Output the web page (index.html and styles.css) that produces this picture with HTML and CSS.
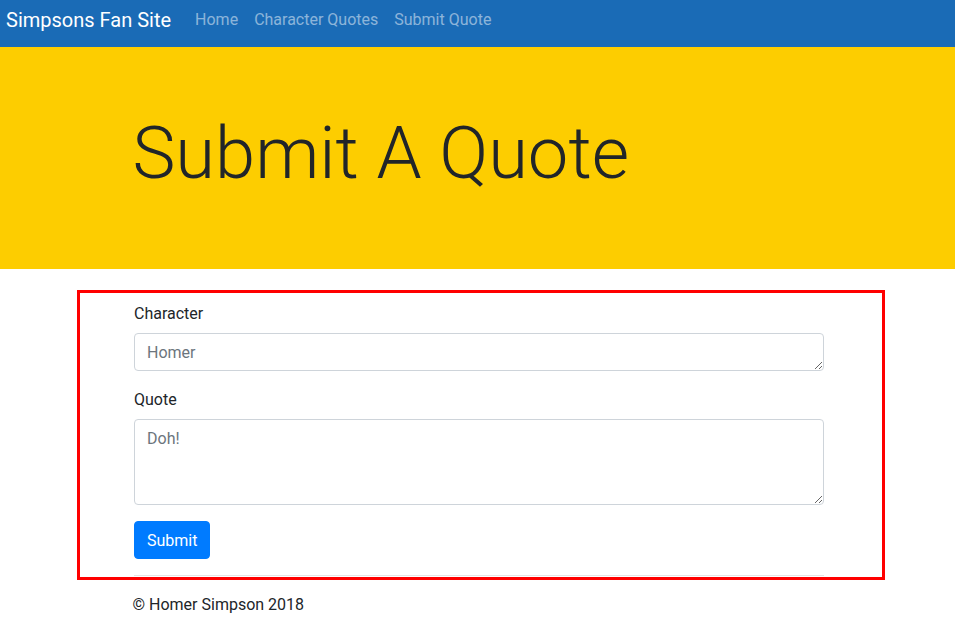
FILE: index.html
```html
<!DOCTYPE html>
<html lang="en">
<head>
<meta charset="utf-8">
<title>Submit A Quote</title>
<link rel="stylesheet" href="styles.css">
</head>
<body>
<nav class="navbar">
  <a class="brand" href="#">Simpsons Fan Site</a>
  <ul class="nav">
    <li><a class="nav-link" href="#">Home</a></li>
    <li><a class="nav-link" href="#">Character Quotes</a></li>
    <li><a class="nav-link" href="#">Submit Quote</a></li>
  </ul>
</nav>
<header class="jumbotron">
  <div class="container">
    <h1 class="display">Submit A Quote</h1>
  </div>
</header>
<main class="highlight">
  <form class="quote-form">
    <div class="form-group">
      <label class="label" for="character">Character</label>
      <textarea class="control" id="character" rows="1" placeholder="Homer"></textarea>
    </div>
    <div class="form-group">
      <label class="label" for="quote">Quote</label>
      <textarea class="control" id="quote" rows="3" placeholder="Doh!"></textarea>
    </div>
    <button class="btn" type="button">Submit</button>
  </form>
  <hr class="rule">
</main>
<footer class="footer">
  <p class="copy">© Homer Simpson 2018</p>
</footer>
</body>
</html>
```
FILE: styles.css
```css
* { box-sizing: border-box; }
html, body { margin: 0; padding: 0; }
body {
  font-family: Roboto, "Liberation Sans", sans-serif;
  font-size: 16px;
  line-height: 1.5;
  color: #212529;
  background: #fff;
}
.navbar {
  display: flex;
  align-items: center;
  height: 47px;
  padding: 0 6px 8px;
  background: #1a6bb6;
}
.brand {
  color: #fff;
  text-decoration: none;
  font-size: 20px;
  line-height: 30px;
  margin-right: 16px;
}
.nav {
  display: flex;
  list-style: none;
  margin: 0;
  padding: 0;
}
.nav-link {
  display: block;
  padding: 8px;
  color: rgba(255, 255, 255, 0.5);
  text-decoration: none;
}
.jumbotron {
  background: #fdcd00;
  padding: 64px 0;
}
.container {
  width: 690px;
  margin: 0 auto;
}
.display {
  margin: 0 0 8px;
  font-size: 72.3px;
  font-weight: 300;
  line-height: 86.4px;
}
.highlight {
  width: 808px;
  margin: 21px 0 0 77px;
  border: 3px solid #ff0000;
  padding: 8px 58px 0 54px;
}
.form-group { margin-bottom: 16px; }
.label {
  display: inline-block;
  padding-top: 1px;
  margin-bottom: 7px;
}
.control {
  display: block;
  width: 100%;
  padding: 7px 12px 5px;
  font-family: inherit;
  font-size: 16px;
  line-height: 1.5;
  color: #495057;
  background: #fff;
  border: 1px solid #ced4da;
  border-radius: 4px;
  margin: 0;
}
.control::placeholder { color: #6c757d; opacity: 1; }
.btn {
  display: inline-block;
  font-family: inherit;
  font-size: 16px;
  line-height: 1.5;
  padding: 7px 12px 5px;
  color: #fff;
  background: #007bff;
  border: 1px solid #007bff;
  border-radius: 4px;
  vertical-align: top;
}
.rule {
  margin: 16px 0 1px;
  border: 0;
  border-top: 1px solid rgba(0, 0, 0, 0.1);
}
.footer {
  width: 690px;
  margin: 13px auto 0;
}
.copy { margin: 0; }
```
